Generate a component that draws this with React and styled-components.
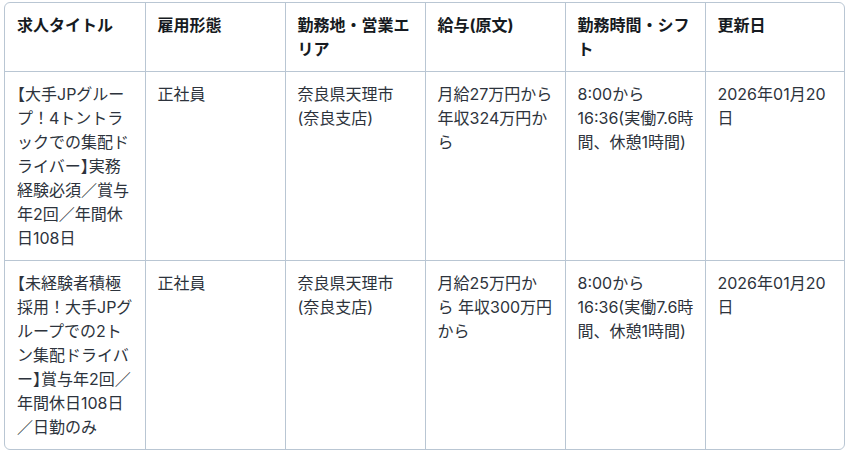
import React from 'react';
import styled, { createGlobalStyle } from 'styled-components';

const GlobalStyle = createGlobalStyle`
  html, body {
    margin: 0;
    padding: 0;
    background: #ffffff;
  }
  body {
    font-family: Inter, "Noto Sans CJK JP", sans-serif;
  }
`;

const columns = ['求人タイトル', '雇用形態', '勤務地・営業エリア', '給与(原文)', '勤務時間・シフト', '更新日'];

const rows = [
  [
    '【大手JPグループ！4トントラックでの集配ドライバー】実務経験必須／賞与年2回／年間休日108日',
    '正社員',
    '奈良県天理市(奈良支店)',
    '月給27万円から年収324万円から',
    '8:00から16:36(実働7.6時間、休憩1時間)',
    '2026年01月20日',
  ],
  [
    '【未経験者積極採用！大手JPグループでの2トン集配ドライバー】賞与年2回／年間休日108日／日勤のみ',
    '正社員',
    '奈良県天理市(奈良支店)',
    '月給25万円から\u00a0年収300万円から',
    '8:00から16:36(実働7.6時間、休憩1時間)',
    '2026年01月20日',
  ],
];

// 【】 are set half width, as in the source page
const withBrackets = (text) =>
  text.split(/([【】])/).map((part, i) =>
    part === '【' || part === '】' ? <Bracket key={i}>{part}</Bracket> : part
  );

function App() {
  return (
    <>
      <GlobalStyle />
      <Page>
        <TableWrap>
          <Table>
            <colgroup>
              {columns.map((c) => (
                <col key={c} style={{ width: '140px' }} />
              ))}
            </colgroup>
            <thead>
              <tr>
                {columns.map((c) => (
                  <HeadCell key={c}>{c}</HeadCell>
                ))}
              </tr>
            </thead>
            <tbody>
              {rows.map((row, i) => (
                <BodyRow key={i}>
                  {row.map((cell, j) => (
                    <BodyCell key={j}>{withBrackets(cell)}</BodyCell>
                  ))}
                </BodyRow>
              ))}
            </tbody>
          </Table>
        </TableWrap>
      </Page>
    </>
  );
}

const Page = styled.div`
  padding: 2px 0 0 4px;
`;

const TableWrap = styled.div`
  width: 839px;
  border: 1px solid #b9c6d3;
  border-radius: 6px;
  overflow: hidden;
`;

const Table = styled.table`
  width: 100%;
  table-layout: fixed;
  border-collapse: collapse;
  border-spacing: 0;
`;

const Cell = styled.td`
  padding: 10px 11px 10px 12px;
  font-size: 16px;
  line-height: 24px;
  text-align: left;
  vertical-align: top;
  border-right: 1px solid #b9c6d3;
  border-bottom: 1px solid #b9c6d3;

  &:last-child {
    border-right: none;
  }
`;

const HeadCell = styled(Cell).attrs({ as: 'th' })`
  font-weight: 700;
  color: #161a21;
`;

const BodyRow = styled.tr`
  &:last-child > td {
    border-bottom: none;
  }
`;

const BodyCell = styled(Cell)`
  font-weight: 400;
  color: #2d333c;
`;

const Bracket = styled.span`
  font-feature-settings: "halt";
`;

export default App;
